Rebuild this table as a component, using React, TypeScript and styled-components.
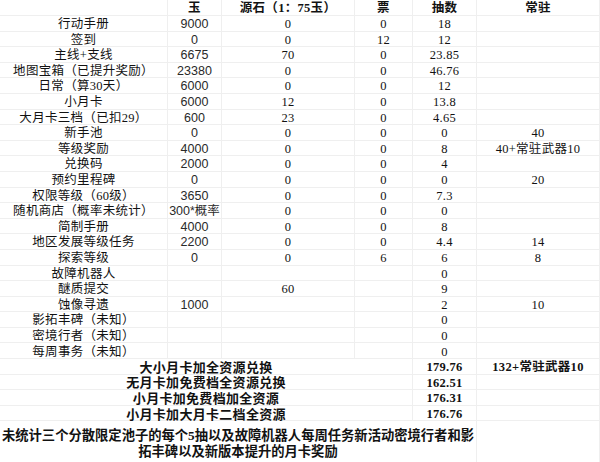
import styled, { createGlobalStyle } from "styled-components";

const GlobalStyle = createGlobalStyle`
  html, body {
    margin: 0;
    padding: 0;
    background: #ffffff;
  }
  body {
    width: 600px;
    height: 462px;
    overflow: hidden;
  }
`;

type Row = [string, string, string, string, string, string];

const header: Row = ["", "玉", "源石（1：75玉）", "票", "抽数", "常驻"];

const rows: Row[] = [
  ["行动手册", "9000", "0", "0", "18", ""],
  ["签到", "0", "0", "12", "12", ""],
  ["主线+支线", "6675", "70", "0", "23.85", ""],
  ["地图宝箱（已提升奖励）", "23380", "0", "0", "46.76", ""],
  ["日常（算30天）", "6000", "0", "0", "12", ""],
  ["小月卡", "6000", "12", "0", "13.8", ""],
  ["大月卡三档（已扣29）", "600", "23", "0", "4.65", ""],
  ["新手池", "0", "0", "0", "0", "40"],
  ["等级奖励", "4000", "0", "0", "8", "40+常驻武器10"],
  ["兑换码", "2000", "0", "0", "4", ""],
  ["预约里程碑", "0", "0", "0", "0", "20"],
  ["权限等级（60级）", "3650", "0", "0", "7.3", ""],
  ["随机商店（概率未统计）", "300*概率", "0", "0", "0", ""],
  ["简制手册", "4000", "0", "0", "8", ""],
  ["地区发展等级任务", "2200", "0", "0", "4.4", "14"],
  ["探索等级", "0", "0", "6", "6", "8"],
  ["故障机器人", "", "", "", "0", ""],
  ["醚质提交", "", "60", "", "9", ""],
  ["蚀像寻遗", "1000", "", "", "2", "10"],
  ["影拓丰碑（未知）", "", "", "", "0", ""],
  ["密境行者（未知）", "", "", "", "0", ""],
  ["每周事务（未知）", "", "", "", "0", ""],
];

const totals: [string, string, string][] = [
  ["大小月卡加全资源兑换", "179.76", "132+常驻武器10"],
  ["无月卡加免费档全资源兑换", "162.51", ""],
  ["小月卡加免费档加全资源", "176.31", ""],
  ["小月卡加大月卡二档全资源", "176.76", ""],
];

export default function App() {
  return (
    <>
      <GlobalStyle />
      <Sheet>
        {header.map((text, i) => (
          <Cell key={`h${i}`} $bold>
            {text}
          </Cell>
        ))}

        {rows.map((row, r) =>
          row.map((text, c) => (
            <Cell key={`r${r}c${c}`} $sans={c === 1}>
              {text}
            </Cell>
          ))
        )}

        {totals.map(([label, pulls, extra]) => (
          <Row key={label}>
            <Cell $span={4} $bold $size={13}>
              {label}
            </Cell>
            <Cell $bold>{pulls}</Cell>
            <Cell $bold>{extra}</Cell>
          </Row>
        ))}

        <Note $span={5}>
          <NoteLine>
            未统计三个分散限定池子的每个5抽以及故障机器人每周任务新活动密境行者和影
          </NoteLine>
          <NoteLine>拓丰碑以及新版本提升的月卡奖励</NoteLine>
        </Note>
        <Blank />
      </Sheet>
    </>
  );
}

/* ===== styled-components ===== */

const Sheet = styled.div`
  display: grid;
  grid-template-columns: 168px 54px 133px 58px 64px 123px;
  grid-template-rows: 16px repeat(26, 15.6px) 40.4px;
  width: 600px;
  height: 462px;
  color: #121212;
  font-family: "Liberation Serif", "Noto Sans CJK SC", serif;
`;

const Row = styled.div`
  display: contents;
`;

const Cell = styled.div<{
  $span?: number;
  $bold?: boolean;
  $sans?: boolean;
  $size?: number;
}>`
  grid-column: span ${(p) => p.$span ?? 1};
  display: flex;
  align-items: center;
  justify-content: center;
  box-sizing: border-box;
  padding-top: 2px;
  border-right: 1px solid #efefef;
  border-bottom: 1px solid #efefef;
  white-space: nowrap;
  font-size: ${(p) => p.$size ?? 12.5}px;
  font-weight: ${(p) => (p.$bold ? 700 : 400)};
  line-height: 1;
  letter-spacing: ${(p) => (p.$sans ? "0" : "0.3px")};
  font-family: ${(p) =>
    p.$sans
      ? `"Liberation Sans", "Noto Sans CJK SC", sans-serif`
      : `"Liberation Serif", "Noto Sans CJK SC", serif`};
  color: ${(p) => (p.$sans ? "#2a2a2a" : "#121212")};
`;

const Note = styled(Cell)`
  flex-direction: column;
  justify-content: flex-start;
  padding-top: 7px;
  border-bottom: none;
  font-size: 13.3px;
  letter-spacing: 0;
  font-weight: 700;
`;

const NoteLine = styled.span`
  display: block;
  line-height: 16px;
`;

const Blank = styled.div`
  box-sizing: border-box;
  border-right: 1px solid #efefef;
`;
